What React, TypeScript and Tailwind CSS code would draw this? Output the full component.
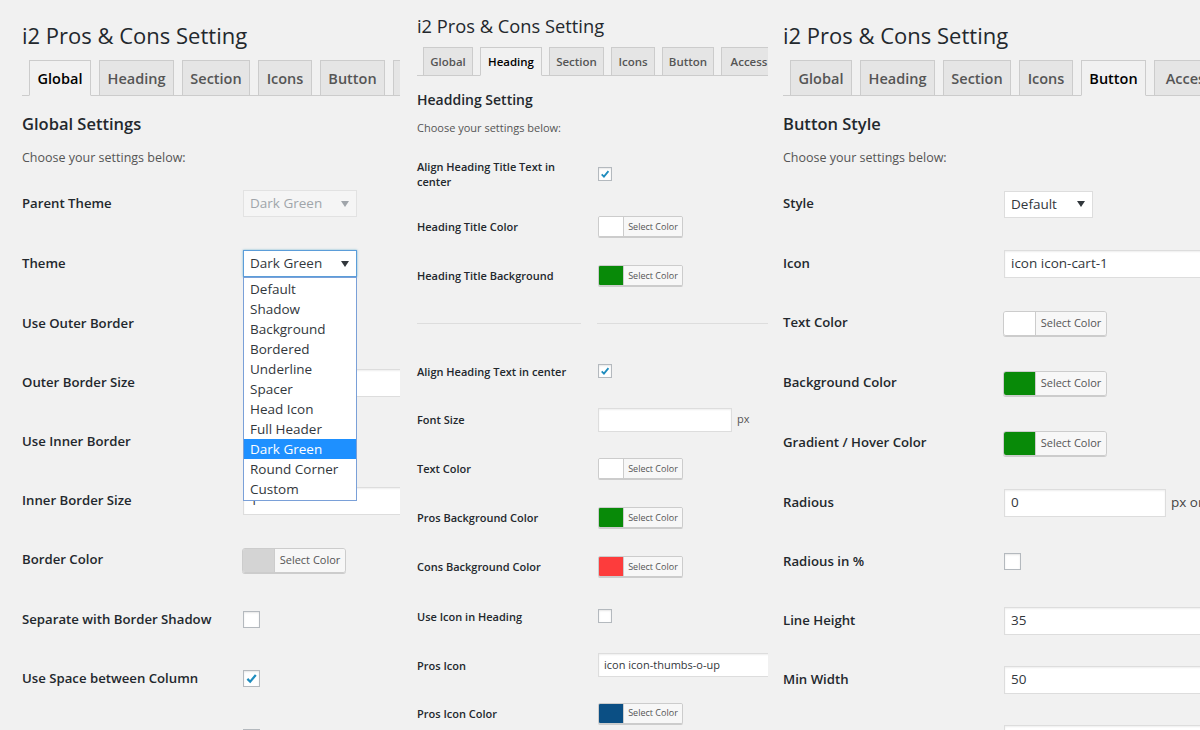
import React from "react";

type Tab = { label: string; w: string };

const bigTabs: Tab[] = [
  { label: "Global", w: "w-[62px]" },
  { label: "Heading", w: "w-[75px]" },
  { label: "Section", w: "w-[68px]" },
  { label: "Icons", w: "w-[54px]" },
  { label: "Button", w: "w-[65px]" },
  { label: "Access", w: "w-[70px]" },
];

const smallTabs: Tab[] = [
  { label: "Global", w: "w-[50px]" },
  { label: "Heading", w: "w-[62px]" },
  { label: "Section", w: "w-[55px]" },
  { label: "Icons", w: "w-[44px]" },
  { label: "Button", w: "w-[52px]" },
  { label: "Access", w: "w-[56px]" },
];

const themes = [
  "Default",
  "Shadow",
  "Background",
  "Bordered",
  "Underline",
  "Spacer",
  "Head Icon",
  "Full Header",
  "Dark Green",
  "Round Corner",
  "Custom",
];

function Tabs({ tabs, active, small }: { tabs: Tab[]; active: string; small?: boolean }) {
  return (
    <div
      className={
        small
          ? "flex h-[28px] items-end gap-[7px] border-b border-[#ccc] pl-[6px]"
          : "flex h-[35px] items-end gap-[8px] border-b border-[#ccc] pl-[7px]"
      }
    >
      {tabs.map((t) => (
        <div
          key={t.label}
          className={[
            "-mb-px flex shrink-0 items-center justify-center border border-[#ccc] font-semibold whitespace-nowrap",
            small ? "h-[29px] pt-px text-[11.5px]" : "h-[36px] pt-px text-[14.5px]",
            t.w,
            t.label === active ? "border-b-[#f1f1f1] bg-[#f1f1f1] text-black" : "bg-[#e5e5e5] text-[#555]",
          ].join(" ")}
        >
          {t.label}
        </div>
      ))}
    </div>
  );
}

function Check({ on, small }: { on?: boolean; small?: boolean }) {
  return (
    <span
      className={[
        "flex shrink-0 items-center justify-center border border-[#b4b9be] bg-white shadow-[inset_0_1px_2px_rgba(0,0,0,0.1)]",
        small ? "h-[14px] w-[14px]" : "h-[17px] w-[17px]",
      ].join(" ")}
    >
      {on && (
        <svg viewBox="0 0 16 16" className={small ? "h-[12px] w-[12px]" : "h-[15px] w-[15px]"}>
          <path d="M3.6 8.4 L6.6 11.4 L12.6 4.2" fill="none" stroke="#1e8cbe" strokeWidth="2.4" />
        </svg>
      )}
    </span>
  );
}

function ColorPick({ swatch, small }: { swatch: string; small?: boolean }) {
  return (
    <div
      className={[
        "flex overflow-hidden border border-[#ccc] shadow-[0_1px_0_#ccc]",
        small ? "h-[21px] w-[85px] rounded-[2px]" : "h-[25px] w-[104px] -ml-px rounded-[3px]",
      ].join(" ")}
    >
      <div className={[small ? "w-[24px]" : "w-[31px]", swatch].join(" ")} />
      <div
        className={[
          "flex flex-1 items-center justify-center border-l border-[#ccc] bg-[#f7f7f7] text-[#555]",
          small ? "text-[9px]" : "text-[11px]",
        ].join(" ")}
      >
        Select Color
      </div>
    </div>
  );
}

function Input({ value, w, small }: { value?: string; w: string; small?: boolean }) {
  return (
    <div
      className={[
        "flex shrink-0 items-center border border-[#ddd] bg-white text-[#32373c] shadow-[inset_0_1px_2px_rgba(0,0,0,0.07)]",
        small ? "h-[24px] px-[5px] text-[11px]" : "h-[28px] px-[6px] text-[13.5px]",
        w,
      ].join(" ")}
    >
      {value}
    </div>
  );
}

function Arrow({ grey }: { grey?: boolean }) {
  return (
    <svg viewBox="0 0 8 6" className="h-[6px] w-[8px]">
      <path d="M0 0 L8 0 L4 6 Z" fill={grey ? "#a0a5aa" : "#32373c"} />
    </svg>
  );
}

function Select({ value, w, disabled, focus }: { value: string; w: string; disabled?: boolean; focus?: boolean }) {
  return (
    <div
      className={[
        "flex h-[27px] items-center justify-between pl-[6px] pr-[7px] text-[13.5px]",
        w,
        disabled
          ? "border border-[#e2e2e2] bg-[#f5f5f5] text-[#a0a5aa]"
          : focus
            ? "border border-[#5b9dd9] bg-white text-[#32373c] shadow-[0_0_2px_rgba(30,140,190,0.6)]"
            : "border border-[#ddd] bg-white text-[#32373c]",
      ].join(" ")}
    >
      <span>{value}</span>
      <Arrow grey={disabled} />
    </div>
  );
}

function Row({ label, children, h }: { label: string; children?: React.ReactNode; h: string }) {
  return (
    <div className={["flex items-center", h].join(" ")}>
      <div className="w-[221px] shrink-0 pr-[17px] text-[13.2px] font-semibold text-[#23282d]">{label}</div>
      <div className="relative flex items-center gap-[5px]">{children}</div>
    </div>
  );
}

function SmallRow({ label, children, h }: { label: string; children?: React.ReactNode; h: string }) {
  return (
    <div className={["flex items-center", h].join(" ")}>
      <div className="w-[181px] shrink-0 pr-[17px] text-[11px] font-semibold leading-[15px] text-[#23282d]">
        {label}
      </div>
      <div className="flex items-center gap-[5px]">{children}</div>
    </div>
  );
}

function BigHeader({ active, heading }: { active: string; heading: string }) {
  return (
    <>
      <h1 className="pt-[22px] text-[22px] leading-[26px] text-[#23282d]">i2 Pros &amp; Cons Setting</h1>
      <div className="mt-[13px]">
        <Tabs tabs={bigTabs} active={active} />
      </div>
      <h2 className="mt-[16px] text-[16.5px] font-semibold leading-[24px] text-[#23282d]">{heading}</h2>
      <p className="mt-[12px] text-[12.5px] leading-[20px] text-[#555]">Choose your settings below:</p>
    </>
  );
}

function GlobalPanel() {
  return (
    <div className="w-[400px] shrink-0 overflow-hidden pl-[22px]">
      <BigHeader active="Global" heading="Global Settings" />
      <div className="mt-[6px]">
        <Row label="Parent Theme" h="h-[59px]">
          <Select value="Dark Green" w="w-[114px]" disabled />
        </Row>
        <Row label="Theme" h="h-[61px]">
          <Select value="Dark Green" w="w-[114px]" focus />
          <div className="absolute left-0 top-[27px] z-10 w-[114px] border border-[#7aa0d8] bg-white py-px">
            {themes.map((t) => (
              <div
                key={t}
                className={[
                  "h-[20px] pl-[6px] text-[13.5px] leading-[20px]",
                  t === "Dark Green" ? "bg-[#1e90ff] text-white" : "text-[#32373c]",
                ].join(" ")}
              >
                {t}
              </div>
            ))}
          </div>
        </Row>
        <Row label="Use Outer Border" h="h-[59px]">
          <Check />
        </Row>
        <Row label="Outer Border Size" h="h-[59px]">
          <Input w="w-[350px]" />
        </Row>
        <Row label="Use Inner Border" h="h-[59px]">
          <Check />
        </Row>
        <Row label="Inner Border Size" h="h-[59px]">
          <Input w="w-[350px]" value="1" />
        </Row>
        <Row label="Border Color" h="h-[60px]">
          <ColorPick swatch="bg-[#d4d4d4]" />
        </Row>
        <Row label="Separate with Border Shadow" h="h-[59px]">
          <Check />
        </Row>
        <Row label="Use Space between Column" h="h-[59px]">
          <Check on />
        </Row>
        <Row label="" h="h-[59px]">
          <Check />
        </Row>
      </div>
    </div>
  );
}

function HeadingPanel() {
  return (
    <div className="w-[368px] shrink-0 overflow-hidden pl-[17px]">
      <h1 className="pt-[14px] text-[18.3px] leading-[24px] text-[#23282d]">i2 Pros &amp; Cons Setting</h1>
      <div className="mt-[10px]">
        <Tabs tabs={smallTabs} active="Heading" small />
      </div>
      <h2 className="mt-[14px] text-[14px] font-semibold leading-[20px] text-[#23282d]">Headding Setting</h2>
      <p className="mt-[10px] text-[11px] leading-[16px] text-[#555]">Choose your settings below:</p>
      <div className="mt-[10px]">
        <SmallRow label="Align Heading Title Text in center" h="h-[56px]">
          <Check on small />
        </SmallRow>
        <SmallRow label="Heading Title Color" h="h-[49px]">
          <ColorPick swatch="bg-white" small />
        </SmallRow>
        <SmallRow label="Heading Title Background" h="h-[49px]">
          <ColorPick swatch="bg-[#088a08]" small />
        </SmallRow>
        <div className="flex h-[47px] items-center">
          <div className="h-px w-[164px] bg-[#ddd]" />
          <div className="ml-[16px] h-px flex-1 bg-[#ddd]" />
        </div>
        <SmallRow label="Align Heading Text in center" h="h-[48px]">
          <Check on small />
        </SmallRow>
        <SmallRow label="Font Size" h="h-[49px]">
          <Input w="w-[134px]" small />
          <span className="text-[11px] text-[#555]">px</span>
        </SmallRow>
        <SmallRow label="Text Color" h="h-[49px]">
          <ColorPick swatch="bg-white" small />
        </SmallRow>
        <SmallRow label="Pros Background Color" h="h-[49px]">
          <ColorPick swatch="bg-[#088a08]" small />
        </SmallRow>
        <SmallRow label="Cons Background Color" h="h-[49px]">
          <ColorPick swatch="bg-[#fd3c3c]" small />
        </SmallRow>
        <SmallRow label="Use Icon in Heading" h="h-[50px]">
          <Check small />
        </SmallRow>
        <SmallRow label="Pros Icon" h="h-[48px]">
          <Input w="w-[200px]" value="icon icon-thumbs-o-up" small />
        </SmallRow>
        <SmallRow label="Pros Icon Color" h="h-[48px]">
          <ColorPick swatch="bg-[#0b4f84]" small />
        </SmallRow>
      </div>
    </div>
  );
}

function ButtonPanel() {
  return (
    <div className="w-[432px] shrink-0 overflow-hidden pl-[15px]">
      <BigHeader active="Button" heading="Button Style" />
      <div className="mt-[6px]">
        <Row label="Style" h="h-[60px]">
          <Select value="Default" w="w-[89px]" />
        </Row>
        <Row label="Icon" h="h-[59px]">
          <Input w="w-[350px]" value="icon icon-cart-1" />
        </Row>
        <Row label="Text Color" h="h-[60px]">
          <ColorPick swatch="bg-white" />
        </Row>
        <Row label="Background Color" h="h-[60px]">
          <ColorPick swatch="bg-[#088a08]" />
        </Row>
        <Row label="Gradient / Hover Color" h="h-[60px]">
          <ColorPick swatch="bg-[#088a08]" />
        </Row>
        <Row label="Radious" h="h-[59px]">
          <Input w="w-[162px]" value="0" />
          <span className="whitespace-nowrap text-[13.5px] text-[#444]">px or</span>
        </Row>
        <Row label="Radious in %" h="h-[59px]">
          <Check />
        </Row>
        <Row label="Line Height" h="h-[59px]">
          <Input w="w-[350px]" value="35" />
        </Row>
        <Row label="Min Width" h="h-[59px]">
          <Input w="w-[350px]" value="50" />
        </Row>
        <Row label="" h="h-[59px]">
          <Input w="w-[350px]" />
        </Row>
      </div>
    </div>
  );
}

export default function App() {
  return (
    <div className="flex h-[730px] w-[1200px] overflow-hidden bg-[#f1f1f1] font-['Open_Sans',sans-serif]">
      <GlobalPanel />
      <HeadingPanel />
      <ButtonPanel />
    </div>
  );
}
